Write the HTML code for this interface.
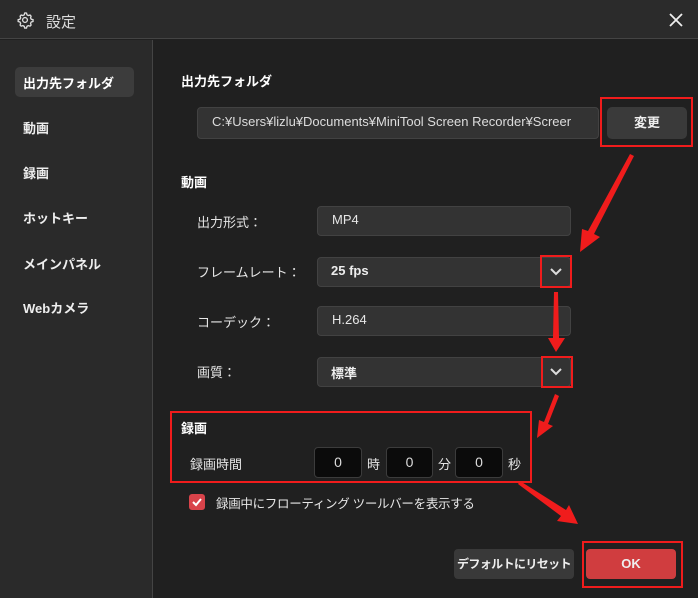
<!DOCTYPE html>
<html><head><meta charset="utf-8"><style>
*{margin:0;padding:0;box-sizing:border-box}
html,body{width:698px;height:598px;overflow:hidden}
body{background:#202020;font-family:"Liberation Sans","Noto Sans CJK JP",sans-serif;color:#e6e6e6;position:relative}
.a{position:absolute}
.t{font-size:13px;white-space:nowrap}
.b{font-weight:bold;color:#fff}
.in{position:absolute;background:#333;border:1px solid #424242;border-radius:4px}
.rb{position:absolute;border:2px solid #f01c1c}
.num{position:absolute;background:#0b0b0b;border:1px solid #3c3c3c;border-radius:4px;font-size:14px;text-align:center;line-height:29px;color:#ddd}
</style></head><body>
<div class="a" style="left:0;top:0;width:698px;height:39px;background:#2b2b2b;border-bottom:1px solid #444"></div>
<div class="a" style="left:0;top:40px;width:153px;height:558px;background:#2a2a2a;border-right:1px solid #444"></div>
<svg class="a" style="left:16px;top:11px" width="18" height="18" viewBox="0 0 24 24" fill="none" stroke="#ddd" stroke-width="1.8"><path d="M12 2.5l2 .3.6 2.3 1.8 1 2.3-.7 1.4 1.5-.7 2.3 1 1.8 2.3.6v2.4l-2.3.6-1 1.8.7 2.3-1.4 1.5-2.3-.7-1.8 1-.6 2.3h-2.4l-.6-2.3-1.8-1-2.3.7-1.4-1.5.7-2.3-1-1.8-2.3-.6v-2.4l2.3-.6 1-1.8-.7-2.3 1.4-1.5 2.3.7 1.8-1 .6-2.3z"/><circle cx="12" cy="12" r="3.2"/></svg>
<div class="a t" style="left:46px;top:11px;font-size:15px;color:#ddd">設定</div>
<svg class="a" style="left:669px;top:13px" width="14" height="14" viewBox="0 0 14 14" stroke="#eee" stroke-width="1.8"><path d="M1 1L13 13M13 1L1 13"/></svg>

<div class="a" style="left:15px;top:67px;width:119px;height:30px;background:#3c3c3c;border-radius:5px"></div>
<div class="a t b" style="left:23px;top:73px">出力先フォルダ</div>
<div class="a t b" style="left:23px;top:118px;color:#eee">動画</div>
<div class="a t b" style="left:23px;top:163px;color:#eee">録画</div>
<div class="a t b" style="left:23px;top:208px;color:#eee">ホットキー</div>
<div class="a t b" style="left:23px;top:254px;color:#eee">メインパネル</div>
<div class="a t b" style="left:23px;top:298px;color:#eee">Webカメラ</div>

<div class="a t b" style="left:181px;top:71px">出力先フォルダ</div>
<div class="in" style="left:197px;top:107px;width:402px;height:32px"></div>
<div class="a t" style="left:212px;top:114px;width:378px;overflow:hidden;color:#ddd">C:¥Users¥lizlu¥Documents¥MiniTool Screen Recorder¥Screer</div>
<div class="a" style="left:607px;top:107px;width:80px;height:32px;background:#3a3a3a;border-radius:5px;text-align:center;line-height:32px;font-size:13px;font-weight:bold;color:#eee">変更</div>
<div class="rb" style="left:600px;top:97px;width:93px;height:50px"></div>

<div class="a t b" style="left:181px;top:172px">動画</div>
<div class="a t" style="left:197px;top:212px">出力形式：</div>
<div class="in" style="left:317px;top:206px;width:254px;height:30px"></div>
<div class="a t" style="left:332px;top:212px">MP4</div>
<div class="a t" style="left:197px;top:262px">フレームレート：</div>
<div class="in" style="left:317px;top:257px;width:254px;height:30px"></div>
<div class="a t b" style="left:331px;top:263px;color:#eee">25 fps</div>
<div class="a t" style="left:197px;top:312px">コーデック：</div>
<div class="in" style="left:317px;top:306px;width:254px;height:30px"></div>
<div class="a t" style="left:332px;top:312px">H.264</div>
<div class="a t" style="left:197px;top:362px">画質：</div>
<div class="in" style="left:317px;top:357px;width:254px;height:30px"></div>
<div class="a t b" style="left:331px;top:363px;color:#eee">標準</div>
<svg class="a" style="left:549px;top:267px" width="14" height="10" viewBox="0 0 14 10" fill="none" stroke="#ddd" stroke-width="2"><path d="M2 2l5 5 5-5"/></svg>
<svg class="a" style="left:549px;top:367px" width="14" height="10" viewBox="0 0 14 10" fill="none" stroke="#ddd" stroke-width="2"><path d="M2 2l5 5 5-5"/></svg>
<div class="rb" style="left:540px;top:255px;width:32px;height:33px"></div>
<div class="rb" style="left:541px;top:356px;width:32px;height:32px"></div>

<div class="rb" style="left:170px;top:411px;width:362px;height:72px"></div>
<div class="a t b" style="left:181px;top:418px">録画</div>
<div class="a t" style="left:190px;top:454px">録画時間</div>
<div class="num" style="left:314px;top:447px;width:48px;height:31px">0</div>
<div class="a t" style="left:367px;top:454px">時</div>
<div class="num" style="left:386px;top:447px;width:47px;height:31px">0</div>
<div class="a t" style="left:438px;top:454px">分</div>
<div class="num" style="left:455px;top:447px;width:48px;height:31px">0</div>
<div class="a t" style="left:508px;top:454px">秒</div>

<div class="a" style="left:189px;top:494px;width:16px;height:16px;background:#d9434a;border-radius:3px"></div>
<svg class="a" style="left:189px;top:494px" width="16" height="16" viewBox="0 0 16 16" fill="none" stroke="#fff" stroke-width="2"><path d="M4 8l3 3 5-6"/></svg>
<div class="a t" style="left:216px;top:493px;font-size:12.5px;letter-spacing:-0.3px">録画中にフローティング ツールバーを表示する</div>

<div class="a" style="left:454px;top:549px;width:120px;height:30px;background:#393939;border-radius:4px;text-align:center;line-height:30px;font-size:12px;letter-spacing:-0.6px;white-space:nowrap;font-weight:bold;color:#eee">デフォルトにリセット</div>
<div class="a" style="left:586px;top:549px;width:90px;height:30px;background:#d03d3f;border-radius:4px;text-align:center;line-height:30px;font-size:13px;font-weight:bold;color:#eee">OK</div>
<div class="rb" style="left:582px;top:541px;width:101px;height:47px"></div>

<svg class="a" style="left:0;top:0" width="698" height="598">
<g fill="#f01c1c">
<polygon points="630,154 634,156 594,234 600,237 580,252 582,229 588,231"/>
<polygon points="554,292 558,292 559,338 565,338 556,352 548,338 553,338"/>
<polygon points="555,394 559,396 548,424 553,426 537,438 539,420 544,422"/>
<polygon points="518,484 520,481 566,510 569,505 578,524 557,521 561,516"/>
</g></svg>
</body></html>
